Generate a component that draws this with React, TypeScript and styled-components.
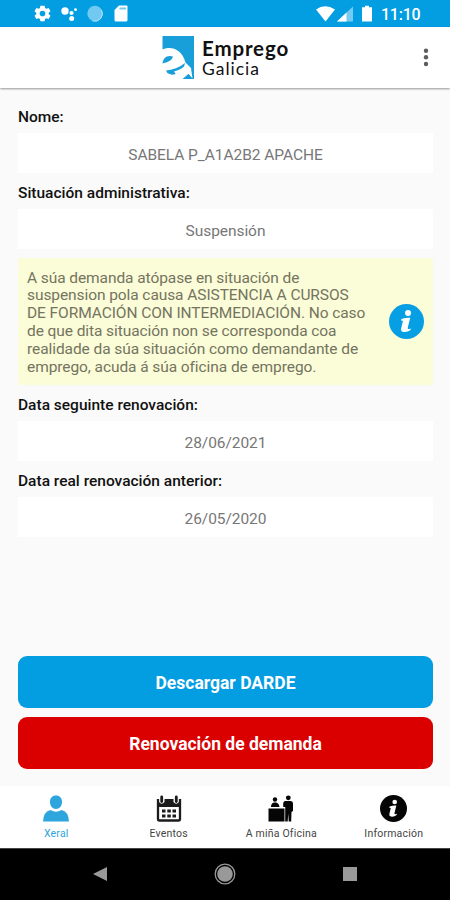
import React from 'react';
import styled, { createGlobalStyle } from 'styled-components';

const Global = createGlobalStyle`
  *{box-sizing:border-box}
  body{margin:0;background:#fafafa;font-family:Roboto,"Liberation Sans",sans-serif}
`;
const Screen = styled.div`width:450px;height:900px;display:flex;flex-direction:column;background:#fafafa;overflow:hidden`;
const StatusBar = styled.div`height:27px;flex:none;background:#039de2;display:flex;justify-content:space-between;color:#fff;padding:0 30px 0 34px`;
const StatusIcons = styled.div<{ $gap: number }>`display:flex;align-items:center;gap:${p => p.$gap}px`;
const Clock = styled.span`font-size:16px;font-weight:500;line-height:27px;letter-spacing:-.25px;padding-top:1px;width:39px;white-space:nowrap`;
const Header = styled.header`height:61px;flex:none;background:#fff;display:flex;align-items:flex-start;padding:9px 20px 0 162px;box-shadow:0 1px 2px rgba(0,0,0,.4);z-index:1`;
const Brand = styled.div`display:flex;gap:7px;flex:1`;
const BrandText = styled.div`display:flex;flex-direction:column;font-family:Lato,sans-serif;color:#111;padding-top:2px`;
const BrandName = styled.span`font-size:20.5px;line-height:21px;font-weight:700;letter-spacing:.85px`;
const BrandRegion = styled.span`font-size:17.5px;line-height:19px;letter-spacing:1px`;
const Content = styled.main`flex:1;padding:19px 17px 17px 18px;display:flex;flex-direction:column`;
const Label = styled.div`height:20px;line-height:20px;font-size:15.5px;font-weight:500;color:#111;white-space:nowrap`;
const Value = styled.div`height:40px;margin:6px 0 10px;background:#fff;display:flex;align-items:center;justify-content:center;padding-top:3px;font-size:15.5px;color:#777;letter-spacing:-.06px`;
const Notice = styled.div`height:127px;margin:-1px 0 10px;background:#fbfcd8;display:flex;align-items:center;justify-content:space-between;padding:0 9px`;
const NoticeText = styled.p`margin:0;font-size:15.5px;line-height:17.8px;letter-spacing:-.08px;color:#74745f;white-space:nowrap;padding-top:3px`;
const Actions = styled.div`margin-top:auto;display:flex;flex-direction:column;gap:9px`;
const Action = styled.button<{ $tone: string }>`height:52px;border:0;border-radius:9px;background:${p => p.$tone};color:#fff;font:700 17.5px Roboto,sans-serif;letter-spacing:0;padding:2px 0 0`;
const Tabs = styled.nav`height:62px;flex:none;background:#fff;display:grid;grid-template-columns:repeat(4,1fr)`;
const Tab = styled.div<{ $active?: boolean }>`display:flex;flex-direction:column;align-items:center;padding-top:9px;font-size:10.5px;line-height:14px;gap:5px;letter-spacing:.2px;color:${p => p.$active ? '#2ea5dc' : '#444'};white-space:nowrap`;
const SystemBar = styled.div`height:52px;flex:none;background:#000;border-top:1px solid #444;display:flex;align-items:center;justify-content:space-between;padding:0 92px 1px`;

const InfoIcon = ({ size, color }: { size: number; color: string }) => (
  <svg width={size} height={size} viewBox="0 0 36 36">
    <circle cx="18" cy="18" r="18" fill={color} />
    <circle cx="19.6" cy="9.3" r="3.1" fill="#fff" />
    <path d="M12.800 15.400q4-1.500 9-1.300l-2.500 10.200q-.5 2.200 3.200.8l-.3 1.700q-3.800 2.800-7.800 1.900-2.500-.7-1.900-3.500l1.800-7.700q.1-.8-2-.6z" fill="#fff" />
  </svg>
);
const Logo = () => (
  <svg width="33" height="43" viewBox="0 0 33 43">
    <path d="M.5 0H32V43H.5Z" fill="#189fda" />
    <path d="M0 13.500C9 9.500 20 13 23.500 26.500L29 32 30.500 42.500 26.500 38 20.500 43H0Z" fill="#fff" />
    <path d="M.5 27.500C1 22 5 18.500 11 20.500Q10 25.500 .5 27.500Z" fill="#189fda" />
    <path d="M4 34.500Q14 34 23 27Q22 34 15.500 37.500Q11 39.500 7.500 38Q4.500 37 4 34.500Z" fill="#189fda" />
    <path d="M12 35.500Q20 33.500 24 28.500L27 34Q21 35 15 40Z" fill="#fff" />
    <path d="M21.500 43 26.500 38 30 42.500 29.500 43Z" fill="#189fda" />
  </svg>
);
const Gear = () => (
  <svg width="17" height="17" viewBox="0 0 24 24"><path fill="#fff" fillRule="evenodd" d="M9 1h6l.6 3.200 2 1.100 3.100-1 2.600 4.500-2.500 2.100v2.200l2.500 2.100-2.600 4.500-3.100-1-2 1.100L15 23H9l-.6-3.200-2-1.100-3.100 1-2.600-4.500 2.500-2.100v-2.200L.7 8.800l2.600-4.500 3.100 1 2-1.100ZM12 8a4 4 0 100 8 4 4 0 000-8Z" /></svg>
);
const Dots = () => <svg width="17" height="16" viewBox="0 0 17 16"><g fill="#fff"><circle cx="4" cy="5" r="3.700" /><circle cx="10.500" cy="7" r="2.100" /><circle cx="14.500" cy="3.700" r="1.400" /><circle cx="10.700" cy="12.500" r="2.500" /></g></svg>;
const Disc = () => <svg width="17" height="17" viewBox="0 0 17 17"><circle cx="8" cy="8.500" r="7.700" fill="#71c9f2" /><path d="M14.500 5a7.700 7.700 0 01-9 11" fill="none" stroke="#b4e5fb" strokeWidth="1" /></svg>;
const Card = () => <svg width="14" height="17" viewBox="0 0 14 17"><path d="M5 .5h7.500q1 0 1 1V15q0 1.500-1.500 1.500H2Q.5 16.500.5 15V5Z" fill="#fff" /><path d="M5 4.500l1-2h6v2z" fill="#76c9ef" /></svg>;
const Person = () => <svg width="26" height="27" viewBox="0 0 26 27"><path d="M13 .5c3.800 0 6 2.500 6 6.500s-2.500 7-6 7-6-3-6-7 2.200-6.500 6-6.500ZM7.500 15q5.500 3.500 11 0Q25.500 16.500 26 26.500H0Q.5 16.500 7.500 15Z" fill="#2ea5dc" /></svg>;
const Calendar = () => (
  <svg width="26" height="27" viewBox="0 0 26 27">
    <path d="M2 4v20q0 1.500 1.500 1.500h19Q24 25.500 24 24V4" fill="none" stroke="#1b1b1b" strokeWidth="2.300" />
    <path d="M1 4h2v3q2.700 3.500 5.500 0V4h9v3q2.700 3.500 5.500 0V4h2v8H1Z" fill="#1b1b1b" />
    <path d="M5.700 2v4.500M20.300 2v4.500" stroke="#1b1b1b" strokeWidth="2.800" strokeLinecap="round" />
    <path d="M6 14.500h3.500v3H6zm5.300 0h3.500v3h-3.500zm5.200 0H20v3h-3.500zM6 19.500h3.500v3H6zm5.300 0h3.500v3h-3.500zm5.200 0H20v3h-3.500z" fill="#1b1b1b" />
  </svg>
);
const Office = () => (
  <svg width="26" height="27" viewBox="0 0 26 27">
    <path d="M.5 13.500h16V26.500H.5zM3 12q0-4 3-4.500h2q3 .5 3.500 4.500zM17.500 6h5q2.500 0 2.500 3v7l-1.500 1-.3 9.500h-2.500l-.4-8-.6 8h-2.500V12h-2V9q0-3 2.300-3Z" fill="#050505" />
    <circle cx="7" cy="4.500" r="2.200" fill="#050505" /><circle cx="20.300" cy="2.800" r="2.400" fill="#050505" />
  </svg>
);

export default function App() {
  return (
    <>
      <Global />
      <Screen>
        <StatusBar>
          <StatusIcons $gap={9.5}><Gear /><Dots /><Disc /><Card /></StatusIcons>
          <StatusIcons $gap={8}>
            <svg width="57" height="18" viewBox="0 0 57 18">
              <path d="M0 4.500Q9-2 19 4.500L9.500 16.500Z" fill="#fff" />
              <path d="M21 16.500 37 1.500V16.500Z" fill="#75cbf3" /><path d="M21 16.500 30.500 7.500V16.500Z" fill="#fff" />
              <path d="M49 .7h4v1.600h3V16.500H46V2.300h3Z" fill="#fff" />
            </svg>
            <Clock>11:10</Clock>
          </StatusIcons>
        </StatusBar>
        <Header>
          <Brand><Logo /><BrandText><BrandName>Emprego</BrandName><BrandRegion>Galicia</BrandRegion></BrandText></Brand>
          <svg width="8" height="43" viewBox="0 0 8 43"><g fill="#5c5c5c"><circle cx="4" cy="14.700" r="2.200" /><circle cx="4" cy="21.300" r="2.200" /><circle cx="4" cy="28" r="2.200" /></g></svg>
        </Header>
        <Content>
          <Label>Nome:</Label><Value>SABELA P_A1A2B2 APACHE</Value>
          <Label>Situación administrativa:</Label><Value>Suspensión</Value>
          <Notice>
            <NoticeText>A súa demanda atópase en situación de<br />suspension pola causa ASISTENCIA A CURSOS<br />DE FORMACIÓN CON INTERMEDIACIÓN. No caso<br />de que dita situación non se corresponda coa<br />realidade da súa situación como demandante de<br />emprego, acuda á súa oficina de emprego.</NoticeText>
            <InfoIcon size={35} color="#069fe3" />
          </Notice>
          <Label>Data seguinte renovación:</Label><Value>28/06/2021</Value>
          <Label>Data real renovación anterior:</Label><Value>26/05/2020</Value>
          <Actions>
            <Action $tone="#039de2">Descargar DARDE</Action>
            <Action $tone="#da0000">Renovación de demanda</Action>
          </Actions>
        </Content>
        <Tabs>
          <Tab $active><Person />Xeral</Tab>
          <Tab><Calendar />Eventos</Tab>
          <Tab><Office />A miña Oficina</Tab>
          <Tab><InfoIcon size={27} color="#050505" />Información</Tab>
        </Tabs>
        <SystemBar>
          <svg width="16" height="16" viewBox="0 0 16 16"><path d="M1 8 15 1V15Z" fill="#999" /></svg>
          <svg width="22" height="22" viewBox="0 0 22 22"><circle cx="11" cy="11" r="9.800" fill="none" stroke="#999" strokeWidth="1.300" /><circle cx="11" cy="11" r="7.800" fill="#999" /></svg>
          <svg width="16" height="16" viewBox="0 0 16 16"><path d="M1 1h14v14H1z" fill="#999" /></svg>
        </SystemBar>
      </Screen>
    </>
  );
}
